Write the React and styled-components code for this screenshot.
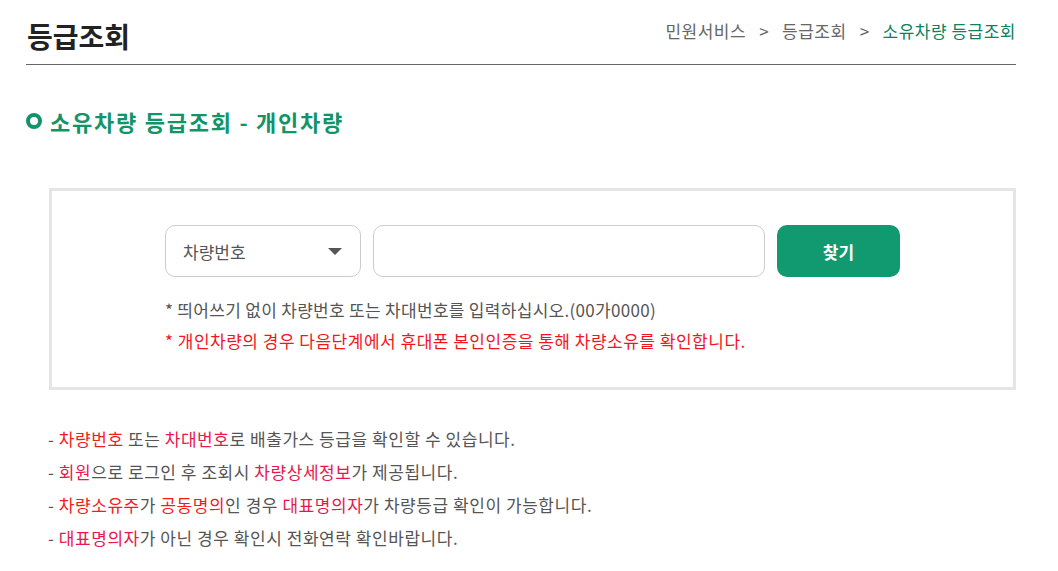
import React from "react";
import styled, { createGlobalStyle } from "styled-components";

const Global = createGlobalStyle`
  html, body { margin: 0; padding: 0; background: #fff; }
  body { font-family: "Noto Sans CJK KR", "Noto Sans", sans-serif; color: #555; }
  * { box-sizing: border-box; }
`;

const Page = styled.div`
  width: 1058px;
  padding: 0 42px 0 26px;
`;

const Header = styled.header`
  display: flex;
  align-items: flex-end;
  justify-content: space-between;
  height: 65px;
  padding-bottom: 14px;
  border-bottom: 1px solid #666;
`;

const PageTitle = styled.h1`
  margin: 0;
  font-size: 28px;
  font-weight: 700;
  color: #222;
  line-height: 1;
  padding-left: 1px;
`;

const Breadcrumb = styled.nav`
  display: flex;
  align-items: center;
  gap: 13px;
  font-size: 17px;
  letter-spacing: 0.5px;
  color: #666;
  line-height: 1;
  padding-bottom: 11px;
`;

const Crumb = styled.span`
  color: ${(p) => (p.$current ? "#0e7f60" : "#666")};
`;

const SectionTitle = styled.h2`
  display: flex;
  align-items: center;
  gap: 8px;
  margin: 45px 0 0;
  font-size: 22px;
  font-weight: 700;
  color: #129469;
  line-height: 1;
  letter-spacing: 1.75px;
`;

const Ring = styled.span`
  width: 16px;
  height: 16px;
  border-radius: 50%;
  border: 4px solid #129469;
  flex: none;
`;

const SearchBox = styled.section`
  margin: 56px 0 0 23px;
  border: 3px solid #e5e5e5;
  height: 202px;
  display: flex;
  justify-content: center;
  padding-top: 34px;
`;

const SearchInner = styled.div`
  width: 735px;
`;

const FormRow = styled.div`
  display: flex;
  gap: 12px;
  height: 52px;
`;

const Select = styled.div`
  width: 196px;
  border: 1px solid #ccc;
  border-radius: 10px;
  display: flex;
  align-items: center;
  justify-content: space-between;
  padding: 0 18px 0 17px;
  font-size: 17px;
  color: #555;
`;

const Caret = styled.span`
  width: 0;
  height: 0;
  border-left: 7px solid transparent;
  border-right: 7px solid transparent;
  border-top: 7px solid #555;
`;

const Input = styled.div`
  flex: 1;
  border: 1px solid #ccc;
  border-radius: 10px;
`;

const Button = styled.button`
  width: 123px;
  border: none;
  border-radius: 10px;
  background: #119a6f;
  color: #fff;
  font-family: inherit;
  font-size: 17px;
  font-weight: 700;
`;

const Note = styled.p`
  margin: 0;
  font-size: 17px;
  line-height: 31px;
  color: ${(p) => (p.$red ? "#f3151e" : "#555")};
  letter-spacing: ${(p) => (p.$red ? "0.5px" : "0.3px")};
`;

const Notes = styled.div`
  margin-top: 17px;
`;

const InfoList = styled.ul`
  list-style: none;
  margin: 32px 0 0 22px;
  padding: 0;
`;

const InfoItem = styled.li`
  font-size: 17px;
  line-height: 33px;
  color: #555;
  letter-spacing: 0.55px;
`;

const Hl = styled.span`
  color: ${(p) => (p.$pink ? "#e8174e" : "#f41b1b")};
`;

export default function App() {
  return (
    <>
      <Global />
      <Page>
        <Header>
          <PageTitle>등급조회</PageTitle>
          <Breadcrumb>
            <Crumb>민원서비스</Crumb>
            <Crumb>&gt;</Crumb>
            <Crumb>등급조회</Crumb>
            <Crumb>&gt;</Crumb>
            <Crumb $current>소유차량 등급조회</Crumb>
          </Breadcrumb>
        </Header>
        <SectionTitle>
          <Ring />
          소유차량 등급조회 - 개인차량
        </SectionTitle>
        <SearchBox>
          <SearchInner>
            <FormRow>
              <Select>
                차량번호
                <Caret />
              </Select>
              <Input />
              <Button>찾기</Button>
            </FormRow>
            <Notes>
              <Note>* 띄어쓰기 없이 차량번호 또는 차대번호를 입력하십시오.(00가0000)</Note>
              <Note $red>* 개인차량의 경우 다음단계에서 휴대폰 본인인증을 통해 차량소유를 확인합니다.</Note>
            </Notes>
          </SearchInner>
        </SearchBox>
        <InfoList>
          <InfoItem>
            - <Hl>차량번호</Hl> 또는 <Hl $pink>차대번호</Hl>로 배출가스 등급을 확인할 수 있습니다.
          </InfoItem>
          <InfoItem>
            - <Hl $pink>회원</Hl>으로 로그인 후 조회시 <Hl $pink>차량상세정보</Hl>가 제공됩니다.
          </InfoItem>
          <InfoItem>
            - <Hl>차량소유주</Hl>가 <Hl>공동명의</Hl>인 경우 <Hl $pink>대표명의자</Hl>가 차량등급 확인이 가능합니다.
          </InfoItem>
          <InfoItem>
            - <Hl $pink>대표명의자</Hl>가 아닌 경우 확인시 전화연락 확인바랍니다.
          </InfoItem>
        </InfoList>
      </Page>
    </>
  );
}
